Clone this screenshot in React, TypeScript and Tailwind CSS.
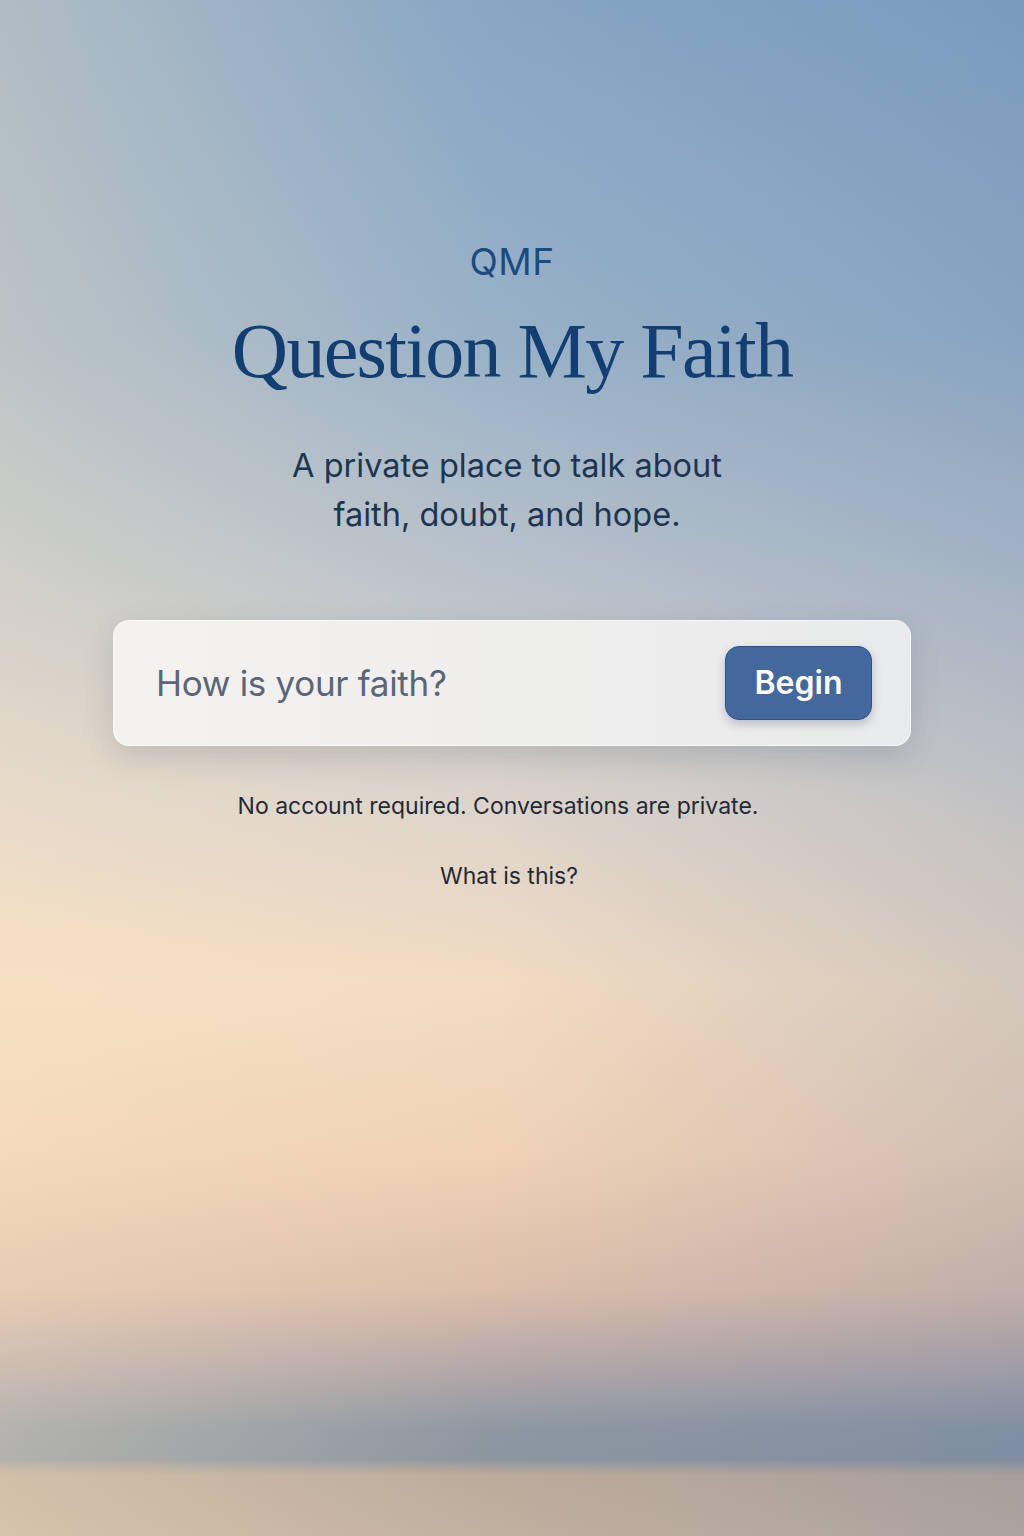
import React from 'react';

const App: React.FC = () => {
  return (
    <div
      className="min-h-[1536px] w-full flex flex-col items-center bg-[image:linear-gradient(to_right,rgba(255,232,196,0.34),rgba(255,236,210,0)_48%,rgba(60,100,160,0.17)),linear-gradient(to_bottom,#87a6c4_0%,#98b1c7_22%,#bac3cb_38%,#dcd4cb_52%,#f2dcc2_64%,#f0d2b6_75%,#dcbeaa_84%,#b0a6a8_89.5%,#8e98a2_93%,#8c96a0_95%,#bcab9b_96%,#c2b09f_100%)]"
      style={{ fontFamily: 'Inter, "Noto Sans", sans-serif' }}
    >
      <div className="mt-[240px] text-[37px] leading-[44px] text-[#1b4a80] tracking-[0.5px]">QMF</div>
      <h1 className="mt-[22px] text-[78px] leading-[90px] text-[#133e71] font-['Liberation_Serif',serif] tracking-[-1.7px]">
        Question My Faith
      </h1>
      <p className="mt-[45px] text-center text-[32.5px] leading-[49px] text-[#1d3550] -translate-x-[5px]">
        A private place to talk about
        <br />
        faith, doubt, and hope.
      </p>

      <div className="mt-[81px] w-[798px] h-[126px] rounded-[16px] bg-[linear-gradient(to_right,#f4f2ef,#e9eaeb)] shadow-[0_10px_30px_rgba(60,70,90,0.18)] border border-white/60 flex items-center pl-[42px] pr-[38px]">
        <span className="flex-1 text-[35px] text-[#5a6678] tracking-[-0.3px]">How is your faith?</span>
        <button className="w-[147px] h-[74px] rounded-[14px] bg-[#43699c] border border-[#2c5290] text-white text-[32px] font-semibold shadow-[0_4px_10px_rgba(30,50,90,0.25)]">
          Begin
        </button>
      </div>

      <p className="mt-[45px] text-[23px] leading-[30px] text-[#1f2a36] -translate-x-[14px]">
        No account required. Conversations are private.
      </p>
      <p className="mt-[40px] text-[23px] leading-[30px] text-[#1f2a36] -translate-x-[3px]">What is this?</p>
    </div>
  );
};

export default App;
